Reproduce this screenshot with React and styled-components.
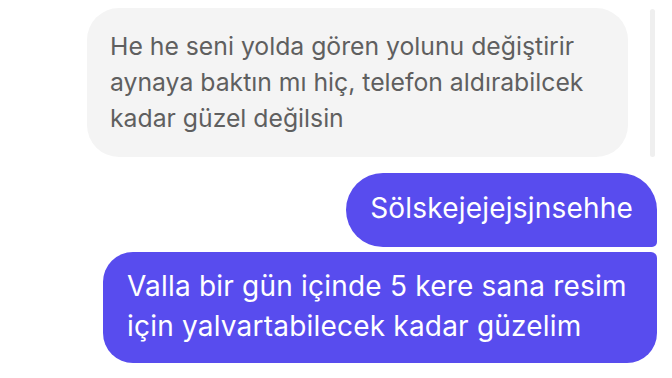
import React from 'react';
import styled, { createGlobalStyle } from 'styled-components';

const GlobalStyle = createGlobalStyle`
  html, body {
    margin: 0;
    padding: 0;
    background: #ffffff;
  }
  body {
    font-family: Inter, "Noto Sans", "Liberation Sans", sans-serif;
    -webkit-font-smoothing: antialiased;
  }
`;

const Thread = styled.div`
  position: relative;
  width: 672px;
  height: 378px;
  overflow: hidden;
  box-sizing: border-box;
  padding: 8px 15px 0 0;
  display: flex;
  flex-direction: column;
`;

const Row = styled.div`
  display: flex;
  justify-content: ${props => (props.mine ? 'flex-end' : 'flex-start')};
  margin-top: ${props => props.gap || 0}px;
`;

const IncomingBubble = styled.div`
  margin-left: 87px;
  width: 541px;
  box-sizing: border-box;
  padding: 20px 22px 21px 23px;
  background: #f4f4f4;
  border-radius: 32px;
  color: #5f5f5f;
  font-size: 24.75px;
  line-height: 36px;
`;

const OutgoingBubble = styled.div`
  box-sizing: border-box;
  max-width: 554px;
  background: #584cee;
  color: #ffffff;
  font-size: 28px;
  letter-spacing: 0.2px;
  line-height: ${props => props.lh}px;
  padding: ${props => props.pad};
  border-radius: ${props => props.radius};
`;

const ScrollThumb = styled.div`
  position: absolute;
  top: 9px;
  right: 17px;
  width: 5px;
  height: 148px;
  border-radius: 3px;
  background: #efefef;
`;

const App = () => {
  return (
    <>
      <GlobalStyle />
      <Thread>
        <Row>
          <IncomingBubble>
            He he seni yolda gören yolunu değiştirir aynaya baktın mı hiç, telefon aldırabilcek kadar güzel değilsin
          </IncomingBubble>
        </Row>
        <Row mine gap={16}>
          <OutgoingBubble lh={38} pad="16px 24px 20px 24px" radius="37px 37px 5px 37px">
            Sölskejejejsjnsehhe
          </OutgoingBubble>
        </Row>
        <Row mine gap={5}>
          <OutgoingBubble lh={40} pad="14px 30px 17px 24px" radius="30px 6px 30px 30px">
            Valla bir gün içinde 5 kere sana resim için yalvartabilecek kadar güzelim
          </OutgoingBubble>
        </Row>
        <ScrollThumb />
      </Thread>
    </>
  );
};

export default App;
